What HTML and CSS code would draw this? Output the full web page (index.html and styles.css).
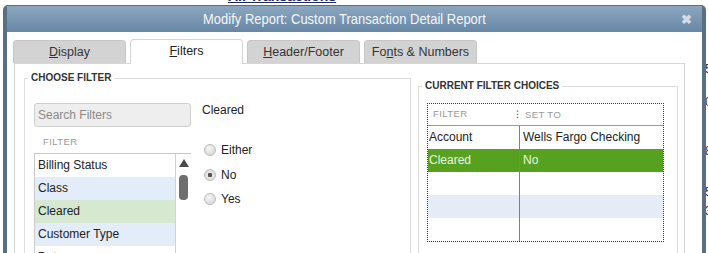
FILE: index.html
```html
<!DOCTYPE html>
<html lang="en">
<head>
  <meta charset="UTF-8">
  <title>Modify Report</title>
  <link rel="stylesheet" href="styles.css">
</head>
<body>

  <!-- report behind the dialog -->
  <div class="report">
    <div class="report-head">All Transactions</div>
    <div class="report-nums">
      <div class="n1">5</div>
      <div class="n2">0</div>
      <div class="n3">8</div>
      <div class="n4">5</div>
      <div class="n5">3</div>
    </div>
  </div>

  <!-- Modify Report dialog -->
  <div class="dialog">
    <div class="titlebar">
      <span class="title-wrap"><span class="title-text">Modify Report: Custom Transaction Detail Report</span></span>
      <span class="close">&#x2716;</span>
    </div>

    <div class="dlg-body">
      <div class="tabs">
        <div class="tab"><u>D</u>isplay</div>
        <div class="tab active"><u>F</u>ilters</div>
        <div class="tab"><u>H</u>eader/Footer</div>
        <div class="tab">Fo<u>n</u>ts &amp; Numbers</div>
      </div>

      <div class="panel">
        <fieldset class="box choose">
          <legend>CHOOSE FILTER</legend>
          <div class="choose-inner">
            <div class="filter-col">
              <div class="search">Search Filters</div>
              <div class="list-head">FILTER</div>
              <div class="list">
                <div class="rows">
                  <div class="row">Billing Status</div>
                  <div class="row blue">Class</div>
                  <div class="row green">Cleared</div>
                  <div class="row blue">Customer Type</div>
                  <div class="row">Date</div>
                </div>
                <div class="scroll">
                  <div class="arrow"></div>
                  <div class="thumb"></div>
                </div>
              </div>
            </div>
            <div class="choice-col">
              <div class="choice-title">Cleared</div>
              <div class="radios">
                <div class="radio"><span class="dot"></span>Either</div>
                <div class="radio"><span class="dot on"></span>No</div>
                <div class="radio"><span class="dot"></span>Yes</div>
              </div>
            </div>
          </div>
        </fieldset>

        <fieldset class="box current">
          <legend>CURRENT FILTER CHOICES</legend>
          <div class="ftable">
            <div class="ft-head">
              <div class="c1">FILTER</div>
              <div class="c2"><span class="grip">&#x205D;</span>SET TO</div>
            </div>
            <div class="ft-row">
              <div class="c1">Account</div>
              <div class="c2">Wells Fargo Checking</div>
            </div>
            <div class="ft-row sel">
              <div class="c1">Cleared</div>
              <div class="c2">No</div>
            </div>
            <div class="ft-row">
              <div class="c1"></div>
              <div class="c2"></div>
            </div>
            <div class="ft-row blue">
              <div class="c1"></div>
              <div class="c2"></div>
            </div>
            <div class="ft-row">
              <div class="c1"></div>
              <div class="c2"></div>
            </div>
          </div>
        </fieldset>
      </div>
    </div>
  </div>

</body>
</html>
```

FILE: styles.css
```css
body {
  margin: 0;
  width: 708px;
  height: 253px;
  overflow: hidden;
  position: relative;
  background: #fff;
  font-family: "Liberation Sans", Arial, sans-serif;
  color: #222;
}

/* Report behind */
.report-head {
  margin-top: -12px;
  padding-left: 228px;
  font-size: 14px;
  font-weight: bold;
  color: #1c2b6b;
  text-decoration: underline;
}
.report-nums {
  margin-left: 705px;
  font-size: 12px;
  color: #333;
  line-height: 14px;
}
.n1 { margin-top: 58px; }
.n2 { margin-top: 19px; }
.n3 { margin-top: 35px; }
.n4 { margin-top: 27px; }
.n5 { margin-top: 5px; }

/* Dialog */
.dialog {
  position: absolute;
  left: 3px;
  top: 5px;
  width: 695px;
  height: 260px;
  border-left: 4px solid #5a6f84;
  border-right: 4px solid #5a6f84;
  border-radius: 5px 5px 0 0;
  background: #fff;
}
.titlebar {
  height: 27px;
  display: flex;
  align-items: center;
  background: linear-gradient(#8ca6bf, #6787a5);
  border-top: 1px solid #5a6f84;
  box-sizing: border-box;
}
.title-wrap {
  flex: 1;
  text-align: center;
}
.title-text {
  display: inline-block;
  font-size: 15px;
  color: #f4f7fa;
  transform: scaleX(0.865);
}
.close {
  width: 21px;
  font-size: 13px;
  font-weight: bold;
  color: #d4dde6;
}

.dlg-body {
  padding: 7px 0 0 6px;
}

/* Tabs */
.tabs {
  display: flex;
  gap: 4px;
  height: 25px;
  margin-bottom: -1px;
  position: relative;
  z-index: 1;
}
.tab {
  width: 113px;
  height: 23px;
  margin-top: 1px;
  box-sizing: border-box;
  background: #d3d3d3;
  border: 1px solid #c6c6c6;
  border-bottom: none;
  border-radius: 4px 4px 0 0;
  text-align: center;
  font-size: 12.5px;
  line-height: 22px;
  color: #333;
}
.tab.active {
  height: 25px;
  margin-top: 0;
  background: #fff;
  border-color: #d4d4d4;
  color: #222;
}

.panel {
  margin-left: 1px;
  width: 671px;
  height: 200px;
  box-sizing: border-box;
  border: 1px solid #d6d6d6;
  display: flex;
  align-items: flex-start;
}

/* Fieldsets */
.box {
  margin: 0;
  padding: 0;
  border: 1px solid #dedede;
  box-sizing: border-box;
  height: 200px;
}
.box legend {
  margin-left: 3px;
  padding: 0 3px;
  font-size: 10px;
  font-weight: bold;
  line-height: 12px;
  color: #333;
}
.choose {
  margin: 8px 0 0 9px;
  width: 387px;
}
.current {
  margin: 16px 0 0 7px;
  width: 260px;
}

.choose-inner {
  display: flex;
  padding: 19px 0 0 9px;
}
.filter-col {
  width: 157px;
}
.search {
  height: 24px;
  box-sizing: border-box;
  background: #eeeeee;
  border: 1px solid #cfcfcf;
  border-radius: 3px;
  padding-left: 3px;
  font-size: 12px;
  line-height: 22px;
  color: #8a8a8a;
}
.list-head {
  height: 26px;
  box-sizing: border-box;
  padding: 9px 0 0 9px;
  font-size: 9.5px;
  line-height: 12px;
  letter-spacing: 0.4px;
  color: #999;
}
.list {
  display: flex;
  border-top: 1px solid #cacaca;
  border-left: 1px solid #cacaca;
}
.rows {
  flex: 1;
}
.row {
  height: 23px;
  padding-left: 3px;
  font-size: 12px;
  line-height: 23px;
  color: #222;
}
.row.blue { background: #e3edf9; }
.row.green { background: #d6e8cf; }

.scroll {
  width: 15px;
  border-left: 1px solid #d2d2d2;
  display: flex;
  flex-direction: column;
  align-items: center;
}
.arrow {
  margin-top: 5px;
  width: 0;
  height: 0;
  border-left: 5px solid transparent;
  border-right: 5px solid transparent;
  border-bottom: 8px solid #4a4a4a;
}
.thumb {
  margin-top: 8px;
  width: 9px;
  height: 25px;
  border-radius: 4px;
  background: #6e6e6e;
}

.choice-col {
  margin-left: 11px;
}
.choice-title {
  font-size: 12px;
  line-height: 14px;
}
.radios {
  margin-top: 21px;
}
.radio {
  display: flex;
  align-items: center;
  height: 24.5px;
  font-size: 12px;
}
.dot {
  width: 12px;
  height: 12px;
  margin: 0 5px 0 2px;
  border-radius: 50%;
  box-sizing: border-box;
  border: 1px solid #bdbdbd;
  background: radial-gradient(circle at 40% 35%, #f6f6f6, #d0d0d0);
}
.dot.on {
  background: radial-gradient(circle, #555 0 2px, #e8e8e8 2.5px, #d0d0d0);
}

/* Current filter table */
.ftable {
  margin: 11px 0 0 8px;
  width: 237px;
  border: 1px dotted #333;
  box-sizing: border-box;
}
.ft-head, .ft-row {
  display: grid;
  grid-template-columns: 92px 1fr;
  font-size: 12px;
}
.ft-head {
  height: 21px;
  border-bottom: 1px solid #999;
  font-size: 9.5px;
  letter-spacing: 0.4px;
  line-height: 20px;
  color: #999;
}
.ft-head .c1 { padding-left: 5px; }
.ft-head .c2 { margin-left: -4px; }
.grip {
  display: inline-block;
  width: 9px;
  color: #666;
  font-size: 11px;
}
.ft-row {
  height: 23px;
  line-height: 23px;
}
.ft-row .c1 {
  border-right: 1px solid #808080;
  padding-left: 1px;
}
.ft-row .c2 {
  padding-left: 3px;
}
.ft-row.sel {
  background: #56a11f;
  color: #eaf5e0;
}
.ft-row.blue { background: #e4ecf8; }
```
